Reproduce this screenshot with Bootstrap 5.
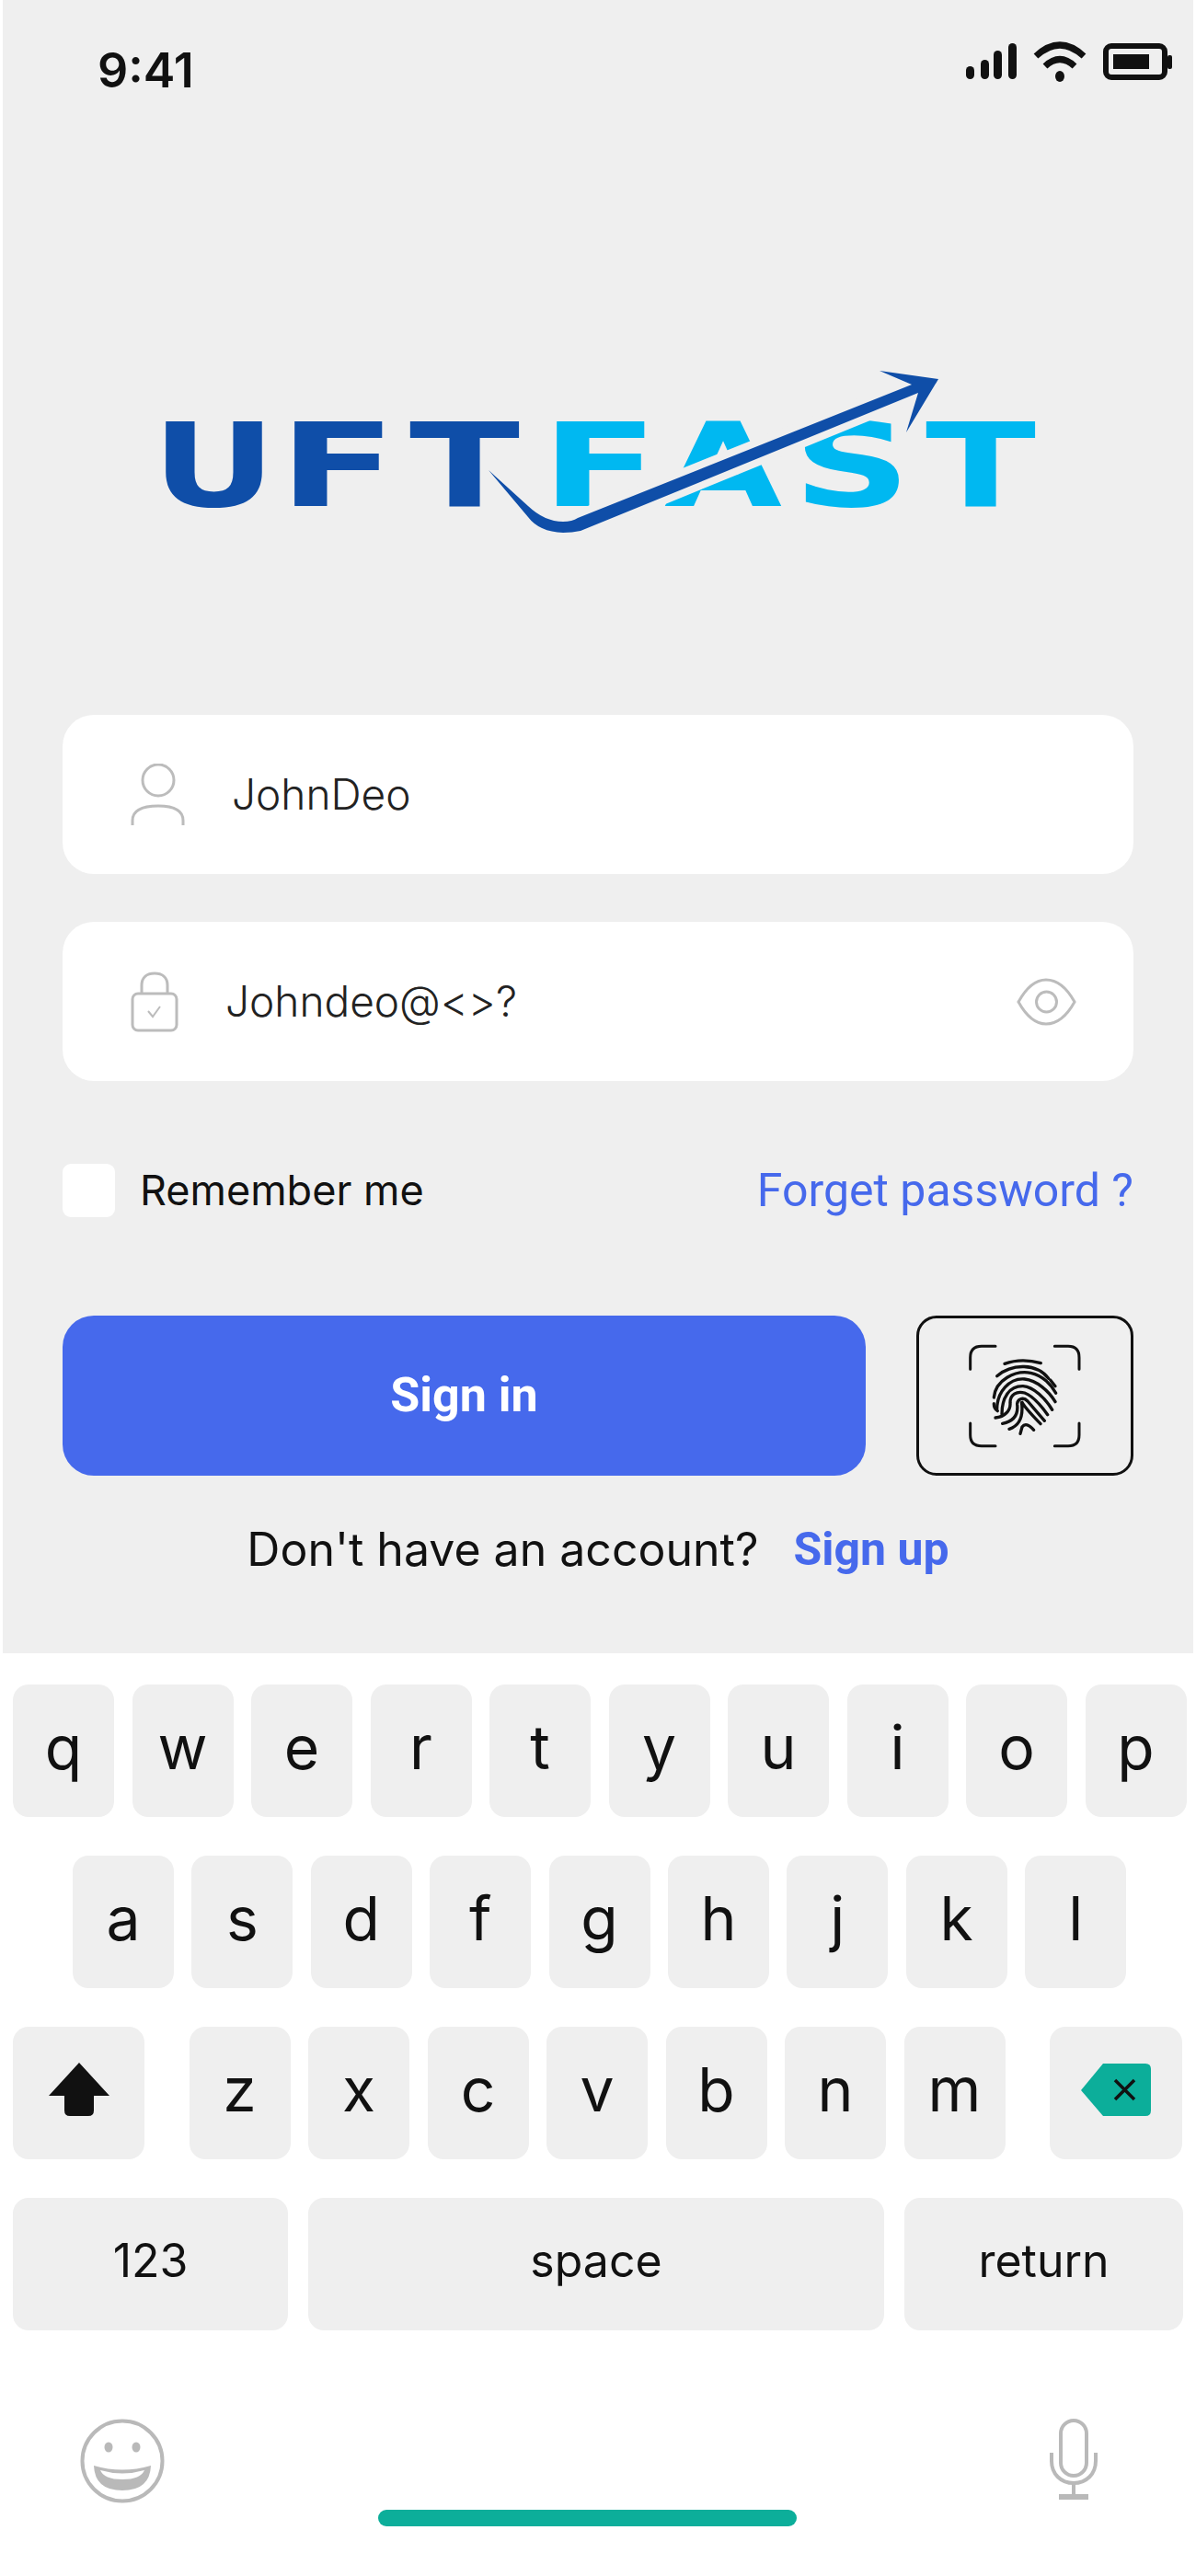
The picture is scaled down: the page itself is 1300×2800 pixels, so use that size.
<!DOCTYPE html>
<html lang="en">
<head>
  <meta charset="UTF-8">
  <meta name="viewport" content="width=device-width, initial-scale=1.0">
  <title>UFT Fast - Sign in</title>
  <link href="https://cdn.jsdelivr.net/npm/bootstrap@5.3.0/dist/css/bootstrap.min.css" rel="stylesheet">
  <style>
    body {
      font-family: "Inter", "Liberation Sans", sans-serif;
      background: #fff;
      color: #111;
      margin: 0;
    }
    .phone { width: 1300px; height: 2800px; }
    .login-area {
      margin: 0 3px;
      height: 1797px;
      background: #efefef;
      padding: 0 65px;
    }
    .status-row { height: 113px; padding-top: 44px; padding-left: 38px; }
    .status-time { font-size: 52px; font-weight: 600; line-height: 66px; color: #111; }
    .status-icons { margin-right: -46px; display: block; }
    .logo-box { margin: 267px 0 0 72px; display: block; }
    .field-box {
      height: 173px;
      background: #fff;
      border-radius: 34px;
      padding: 0 62px 0 74px;
      margin-top: 52px;
      font-size: 46px;
      font-weight: 300;
      color: #222;
    }
    .field-first { margin-top: 177px; }
    .field-icon { margin-right: 51px; flex: none; }
    .check-row { height: 58px; margin-top: 90px; }
    .check-box { width: 57px; height: 58px; background: #fff; border-radius: 9px; margin-right: 27px; }
    .check-text { font-size: 45px; line-height: 58px; color: #111; }
    .forget-link { font-size: 50px; line-height: 58px; color: #4669ec; text-decoration: none; font-family: "Roboto", sans-serif; }
    .button-row { margin-top: 107px; height: 174px; }
    .signin-btn {
      width: 873px;
      height: 174px;
      background: #4669ec;
      color: #fff;
      border: 0;
      border-radius: 34px;
      font-size: 52px;
      font-weight: 700;
      font-family: "Roboto", sans-serif;
    }
    .finger-btn {
      width: 236px;
      height: 174px;
      background: transparent;
      border: 3px solid #111;
      border-radius: 22px;
      padding: 0;
    }
    .signup-row { margin-top: 50px; height: 60px; font-size: 50px; line-height: 60px; }
    .signup-row a { color: #4669ec; font-weight: 700; text-decoration: none; margin-left: 38px; font-family: "Roboto", sans-serif; }
    .keys-area { padding-top: 34px; }
    .key-row { display: flex; gap: 19.5px; padding-left: 14px; height: 144px; margin-bottom: 42px; }
    .key-row-mid { padding-left: 79px; gap: 19.4px; }
    .key-row-last { margin-bottom: 36px; gap: 22px; }
    .kb-key {
      width: 110px;
      height: 144px;
      background: #efefef;
      border-radius: 17px;
      font-size: 66px;
      font-weight: 400;
      color: #111;
      padding-bottom: 8px;
    }
    .kb-shift { width: 143px; margin-right: 29px; }
    .kb-back { width: 144px; margin-left: 29px; }
    .kb-small { font-size: 50px; }
    .kb-num { width: 299px; }
    .kb-space { width: 626px; }
    .kb-return { width: 303px; }
    .kb-bottom { margin-top: 96px; height: 117px; padding-left: 87px; }
    .home-bar { width: 455px; height: 18px; background: #0cae9a; border-radius: 9px; margin: 99px 275px 0 232px; }
  </style>
</head>
<body>
  <div class="phone">

    <!-- login area -->
    <div class="login-area">
      <div class="status-row d-flex justify-content-between align-items-start">
        <span class="status-time">9:41</span>
        <svg class="status-icons" width="230" height="48" viewBox="1020 55 230 48" aria-hidden="true">
          <g fill="#111">
            <rect x="1022" y="83" width="9" height="14" rx="4.5"/>
            <rect x="1038" y="76" width="9" height="21" rx="4.5"/>
            <rect x="1052" y="66" width="9" height="31" rx="4.5"/>
            <rect x="1068" y="58" width="9" height="39" rx="4.5"/>
          </g>
          <g fill="none" stroke="#111" stroke-width="7">
            <path d="M1098 72 Q1124 48 1150 72"/>
            <path d="M1108 83 Q1124 68 1140 83"/>
          </g>
          <ellipse cx="1124" cy="94" rx="5" ry="6" fill="#111"/>
          <rect x="1174" y="61" width="64" height="34" rx="6" fill="none" stroke="#111" stroke-width="6"/>
          <rect x="1182" y="70" width="39" height="16" fill="#111"/>
          <rect x="1241" y="71" width="5" height="15" rx="2" fill="#111"/>
        </svg>
      </div>

      <svg class="logo-box" width="1000" height="220" viewBox="140 380 1000 220" role="img" aria-label="UFT FAST">
        <g font-family="DejaVu Sans" font-weight="700" font-size="126" fill="#0f4ea8">
          <text x="165" y="550" textLength="135" lengthAdjust="spacingAndGlyphs">U</text>
          <text x="303" y="550" textLength="128" lengthAdjust="spacingAndGlyphs">F</text>
          <text x="445" y="550" textLength="120" lengthAdjust="spacingAndGlyphs">T</text>
        </g>
        <g font-family="DejaVu Sans" font-weight="700" font-size="126" fill="#00b8f1">
          <text x="588" y="550" textLength="128" lengthAdjust="spacingAndGlyphs">F</text>
          <text x="722" y="550" textLength="128" lengthAdjust="spacingAndGlyphs">A</text>
          <text x="862" y="550" textLength="128" lengthAdjust="spacingAndGlyphs">S</text>
          <text x="1006" y="550" textLength="120" lengthAdjust="spacingAndGlyphs">T</text>
        </g>
        <path d="M628 563 L991 418 M631 577 L998 427" stroke="#efefef" stroke-width="16" fill="none"/>
        <path fill="#0f4ea8" d="M531 511 L574 550 Q592 567 612 567 Q622 567 628 563 L991 418 L956 403 L1020 412 L985 470 L998 427 L631 577 Q622 579 612 579 Q586 578 574 562 Z"/>
      </svg>

      <div class="field-box field-first d-flex align-items-center">
        <svg class="field-icon" width="59" height="67" viewBox="0 0 59 67" fill="none" stroke="#bcbcbc" stroke-width="3" aria-hidden="true">
          <ellipse cx="30" cy="18" rx="17" ry="17"/>
          <path d="M2 67 V62 C2 50 14 46 30 46 C46 46 57 50 57 62 V67"/>
        </svg>
        <span>JohnDeo</span>
      </div>

      <div class="field-box d-flex align-items-center">
        <svg class="field-icon" width="52" height="66" viewBox="0 0 52 66" fill="none" stroke="#bcbcbc" stroke-width="3" aria-hidden="true">
          <path d="M12 24 V15 C12 6 18 2 26 2 C34 2 40 6 40 15 V24"/>
          <rect x="2" y="24" width="48" height="40" rx="6"/>
          <path d="M19 43 L24 49 L32 38" stroke-width="2"/>
        </svg>
        <span>Johndeo@&lt;&gt;?</span>
        <svg class="ms-auto" width="65" height="52" viewBox="0 0 65 52" fill="none" stroke="#bcbcbc" stroke-width="3" aria-hidden="true">
          <path d="M2 26 C12 8 22 2 32 2 C43 2 53 8 63 26 C53 44 43 50 32 50 C22 50 12 44 2 26 Z"/>
          <circle cx="32.5" cy="26" r="11"/>
        </svg>
      </div>

      <div class="check-row d-flex align-items-center">
        <div class="check-box"></div>
        <span class="check-text">Remember me</span>
        <a class="forget-link ms-auto" href="#">Forget password ?</a>
      </div>

      <div class="button-row d-flex justify-content-between">
        <button class="signin-btn" type="button">Sign in</button>
        <button class="finger-btn d-flex align-items-center justify-content-center" type="button" aria-label="Fingerprint">
          <svg width="125" height="114" viewBox="265 185 375 342" fill="none" stroke="#111" stroke-linecap="round" aria-hidden="true">
            <g stroke-width="9">
              <path d="M355 195 H310 Q273 195 273 232 V270"/>
              <path d="M548 195 H592 Q628 195 628 232 V270"/>
              <path d="M273 446 V484 Q273 520 310 520 H355"/>
              <path d="M628 446 V484 Q628 520 592 520 H548"/>
            </g>
            <g stroke-width="10">
              <path d="M385 252 Q440 232 503 250"/>
              <path d="M360 292 C410 250 490 250 528 300"/>
              <path d="M534 305 L550 325"/>
              <path d="M350 362 C355 305 420 272 470 282 C510 290 538 322 552 348"/>
              <path d="M360 400 C360 345 400 298 450 302 C490 306 530 342 550 376"/>
              <path d="M376 416 C376 362 400 324 445 325 C480 328 518 365 540 402"/>
              <path d="M355 428 C385 425 405 405 403 380 C402 352 425 340 450 347 C475 356 505 390 525 418"/>
              <path d="M378 447 C415 440 430 420 426 385 C425 368 445 358 460 374 L515 438"/>
              <path d="M400 465 C430 455 448 430 440 375 C450 395 475 420 502 448"/>
              <path d="M436 480 L442 458 Q455 440 480 468"/>
              <path d="M350 382 Q350 398 362 406"/>
            </g>
          </svg>
        </button>
      </div>

      <div class="signup-row d-flex justify-content-center">
        <span>Don't have an account?</span><a href="#">Sign up</a>
      </div>
    </div>

    <!-- keyboard -->
    <div class="keys-area">
      <div class="key-row">
        <div class="kb-key d-flex align-items-center justify-content-center">q</div>
        <div class="kb-key d-flex align-items-center justify-content-center">w</div>
        <div class="kb-key d-flex align-items-center justify-content-center">e</div>
        <div class="kb-key d-flex align-items-center justify-content-center">r</div>
        <div class="kb-key d-flex align-items-center justify-content-center">t</div>
        <div class="kb-key d-flex align-items-center justify-content-center">y</div>
        <div class="kb-key d-flex align-items-center justify-content-center">u</div>
        <div class="kb-key d-flex align-items-center justify-content-center">i</div>
        <div class="kb-key d-flex align-items-center justify-content-center">o</div>
        <div class="kb-key d-flex align-items-center justify-content-center">p</div>
      </div>
      <div class="key-row key-row-mid">
        <div class="kb-key d-flex align-items-center justify-content-center">a</div>
        <div class="kb-key d-flex align-items-center justify-content-center">s</div>
        <div class="kb-key d-flex align-items-center justify-content-center">d</div>
        <div class="kb-key d-flex align-items-center justify-content-center">f</div>
        <div class="kb-key d-flex align-items-center justify-content-center">g</div>
        <div class="kb-key d-flex align-items-center justify-content-center">h</div>
        <div class="kb-key d-flex align-items-center justify-content-center">j</div>
        <div class="kb-key d-flex align-items-center justify-content-center">k</div>
        <div class="kb-key d-flex align-items-center justify-content-center">l</div>
      </div>
      <div class="key-row">
        <div class="kb-key kb-shift d-flex align-items-center justify-content-center">
          <svg width="66" height="58" viewBox="0 0 66 58" fill="#111" aria-hidden="true">
            <path d="M33 0 L66 36 H49 V52 Q49 58 43 58 H23 Q17 58 17 52 V36 H0 Z"/>
          </svg>
        </div>
        <div class="kb-key d-flex align-items-center justify-content-center">z</div>
        <div class="kb-key d-flex align-items-center justify-content-center">x</div>
        <div class="kb-key d-flex align-items-center justify-content-center">c</div>
        <div class="kb-key d-flex align-items-center justify-content-center">v</div>
        <div class="kb-key d-flex align-items-center justify-content-center">b</div>
        <div class="kb-key d-flex align-items-center justify-content-center">n</div>
        <div class="kb-key d-flex align-items-center justify-content-center">m</div>
        <div class="kb-key kb-back d-flex align-items-center justify-content-center">
          <svg width="76" height="57" viewBox="0 0 76 57" aria-hidden="true">
            <path fill="#0cae9a" d="M24 0 H70 Q76 0 76 6 V51 Q76 57 70 57 H24 L0 29 Z"/>
            <path d="M37 18 L58 39 M58 18 L37 39" stroke="#111" stroke-width="3.5"/>
          </svg>
        </div>
      </div>
      <div class="key-row key-row-last">
        <div class="kb-key kb-num kb-small d-flex align-items-center justify-content-center">123</div>
        <div class="kb-key kb-space kb-small d-flex align-items-center justify-content-center">space</div>
        <div class="kb-key kb-return kb-small d-flex align-items-center justify-content-center">return</div>
      </div>
      <div class="kb-bottom d-flex align-items-start">
        <svg width="92" height="92" viewBox="0 0 92 92" fill="none" aria-hidden="true">
          <circle cx="46" cy="46" r="43.5" stroke="#b9b9b9" stroke-width="4"/>
          <ellipse cx="31" cy="31" rx="4.5" ry="5.5" fill="#b9b9b9"/>
          <ellipse cx="61" cy="31" rx="4.5" ry="5.5" fill="#b9b9b9"/>
          <path fill="#b9b9b9" d="M15 51 Q46 60 77 51 Q76 78 46 78 Q16 78 15 51 Z"/>
          <path fill="#fff" d="M22 56 Q46 63 70 56 Q66 66 46 66 Q26 66 22 56 Z"/>
        </svg>
        <div class="home-bar"></div>
        <svg width="52" height="88" viewBox="0 0 52 88" fill="none" stroke="#b9b9b9" stroke-width="4" aria-hidden="true">
          <rect x="12" y="2" width="28" height="60" rx="14"/>
          <path d="M2 37 V46 C2 60 12 70 26 70 C40 70 50 60 50 46 V37"/>
          <path d="M26 70 V84"/>
          <path d="M10 85 H42" stroke-width="6"/>
        </svg>
      </div>
    </div>
  </div>
  <script src="https://cdn.jsdelivr.net/npm/bootstrap@5.3.0/dist/js/bootstrap.bundle.min.js"></script>
</body>
</html>
